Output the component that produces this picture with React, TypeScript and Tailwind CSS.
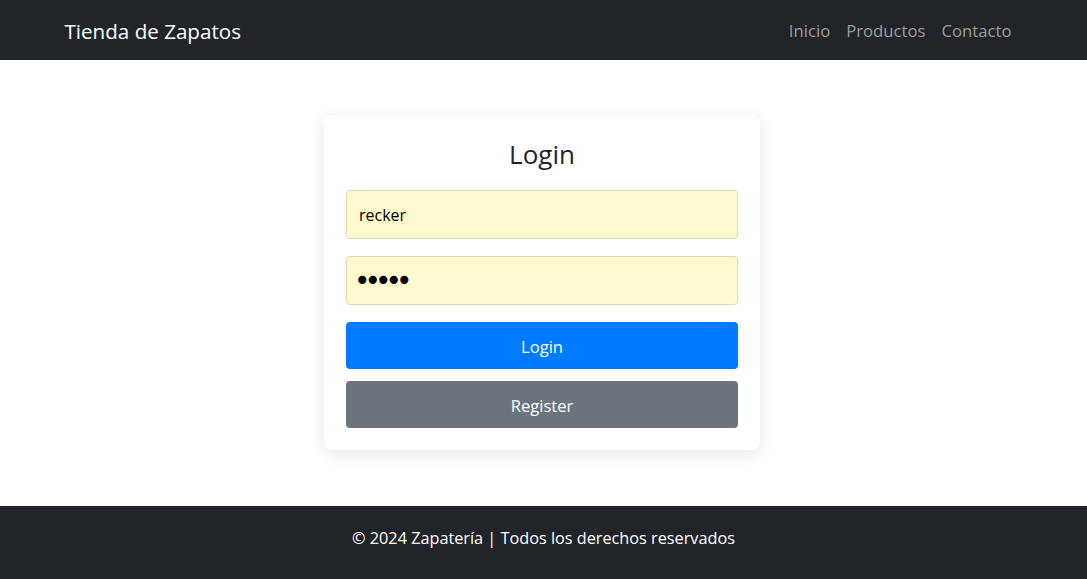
import React from 'react';

const App = () => {
  const links = ['Inicio', 'Productos', 'Contacto'];

  return (
    <div className="min-h-screen flex flex-col bg-white text-[#212529] font-['Segoe_UI','Open_Sans','Noto_Sans',sans-serif]">
      {/* Navbar */}
      <nav className="h-[60px] bg-[#212529] flex items-center">
        <div className="w-[960px] mx-auto flex items-center justify-between pt-[1px]">
          <span className="text-[20.6px] text-white leading-[30px] pl-[1px]">Tienda de Zapatos</span>
          <ul className="flex items-center pr-[4px]">
            {links.map((link) => (
              <li key={link}>
                <a href="#" className="block px-2 text-[16.7px] leading-6 text-[#9a9c9f]">
                  {link}
                </a>
              </li>
            ))}
          </ul>
        </div>
      </nav>

      {/* Login card */}
      <main className="flex-1 flex justify-center pt-[55px] pb-[56px] pr-[3px]">
        <div className="w-[436px] h-fit bg-white rounded-lg shadow-[0_4px_16px_rgba(0,0,0,0.1)] px-[22px] pt-[22px] pb-[22px]">
          <h3 className="text-[26px] leading-[34px] text-center mb-[19px]">Login</h3>
          <form className="flex flex-col">
            <input
              type="text"
              readOnly
              value="recker"
              className="h-[49px] px-3 rounded-[4px] border border-[#dcd9b6] bg-[#fffacd] text-[16px] text-black outline-none"
            />
            <input
              type="password"
              readOnly
              value="12345"
              className="h-[49px] pl-[7px] pr-3 mt-[17px] rounded-[4px] border border-[#dcd9b6] bg-[#fffacd] text-[28px] tracking-[-6px] font-['DejaVu_Sans',sans-serif] text-black outline-none"
            />
            <button
              type="button"
              className="h-[47px] mt-[17px] pt-[3px] rounded-[4px] bg-[#007bff] text-white text-[16.6px]"
            >
              Login
            </button>
            <button
              type="button"
              className="h-[47px] mt-3 pt-[3px] rounded-[4px] bg-[#6c757d] text-white text-[16.6px]"
            >
              Register
            </button>
          </form>
        </div>
      </main>

      {/* Footer */}
      <footer className="h-[73px] bg-[#212529] text-white text-center pt-5">
        <p className="text-[16.25px] leading-6">© 2024 Zapatería | Todos los derechos reservados</p>
      </footer>
    </div>
  );
};

export default App;
